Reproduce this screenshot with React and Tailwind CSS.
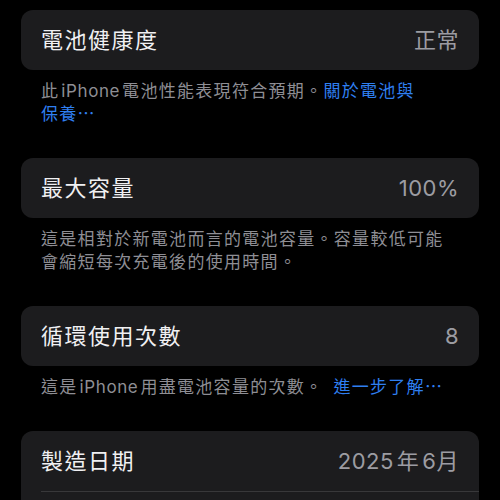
import React from "react";

const font = { fontFamily: 'Inter, "Noto Sans CJK TC", sans-serif' };

function Row({ label, value }) {
  return (
    <div className="flex h-[60px] items-center justify-between px-[20px]">
      <span className="text-[22px] tracking-[1.5px] text-[#f0f0f2]">{label}</span>
      <span className="text-[22px] tracking-[0.5px] text-[#9c9ca2]">{value}</span>
    </div>
  );
}

function Footer({ children }) {
  return (
    <div className="px-[20px] pt-[10px] pb-[32px] text-[17px] leading-[23px] tracking-[1.3px] text-[#8e8e94]">
      {children}
    </div>
  );
}

export default function App() {
  return (
    <div className="h-[500px] w-[500px] overflow-hidden bg-black px-[21px] pt-[10px]" style={font}>
      <div className="rounded-[12px] bg-[#1c1c1e]">
        <Row label="電池健康度" value="正常" />
      </div>
      <Footer>
        <div className="whitespace-nowrap">
          此<span className="mx-[2px] tracking-[0.6px]">iPhone</span>電池性能表現符合預期。<span className="text-[#2f7ff0]">關於電池與</span>
        </div>
        <div className="whitespace-nowrap text-[#2f7ff0]">保養⋯</div>
      </Footer>

      <div className="rounded-[12px] bg-[#1c1c1e]">
        <Row label="最大容量" value="100%" />
      </div>
      <Footer>
        <div className="whitespace-nowrap">這是相對於新電池而言的電池容量。容量較低可能</div>
        <div className="whitespace-nowrap">會縮短每次充電後的使用時間。</div>
      </Footer>

      <div className="rounded-[12px] bg-[#1c1c1e]">
        <Row label="循環使用次數" value="8" />
      </div>
      <Footer>
        <div className="whitespace-nowrap">
          這是<span className="mx-[2px] tracking-[0.6px]">iPhone</span>用盡電池容量的次數。<span className="ml-[10px] text-[#2f7ff0]">進一步了解⋯</span>
        </div>
      </Footer>

      <div className="rounded-[12px] bg-[#1c1c1e]">
        <Row
          label="製造日期"
          value={
            <>
              2025<span className="mx-[3px]">年</span>6月
            </>
          }
        />
        <div className="ml-[20px] h-px bg-[#38383a]" />
        <div className="h-[60px]" />
      </div>
    </div>
  );
}
